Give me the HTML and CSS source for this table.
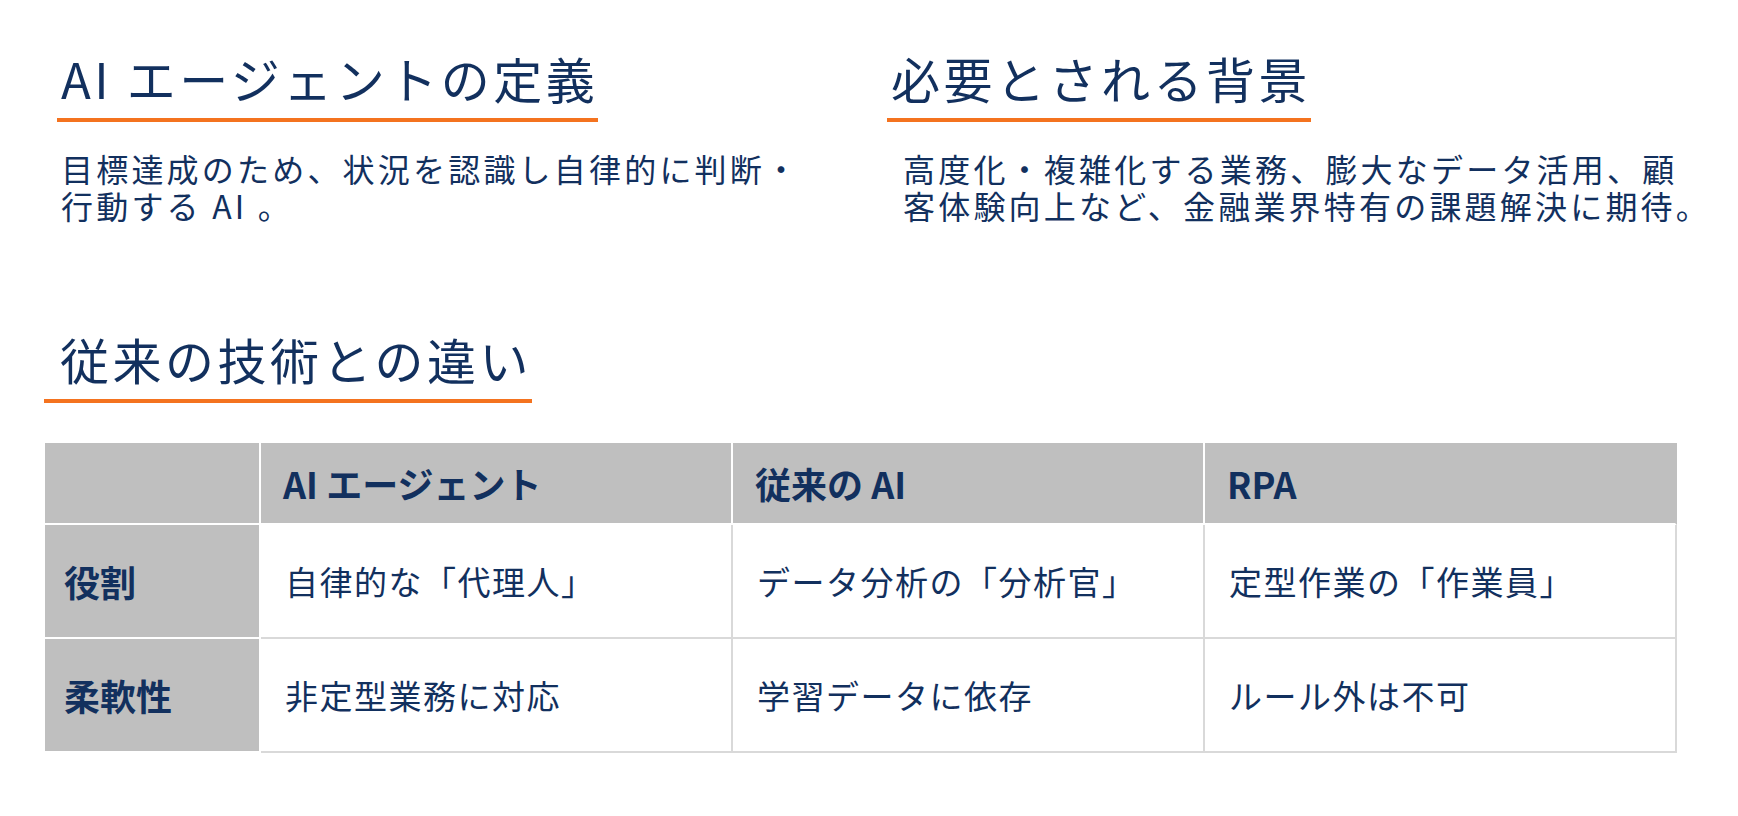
FILE: index.html
```html
<!DOCTYPE html>
<html lang="ja">
<head>
<meta charset="utf-8">
<title>AI エージェント</title>
<link rel="stylesheet" href="styles.css">
</head>
<body>
<main class="slide">
  <section class="intro">
    <div class="col col-def">
      <h2 class="heading">AI エージェントの定義</h2>
      <p class="lead"><span class="line">目標達成のため、状況を認識し自律的に判断・</span><span class="line">行動する AI 。</span></p>
    </div>
    <div class="col col-bg">
      <h2 class="heading">必要とされる背景</h2>
      <p class="lead"><span class="line">高度化・複雑化する業務、膨大なデータ活用、顧</span><span class="line">客体験向上など、金融業界特有の課題解決に期待。</span></p>
    </div>
  </section>
  <section class="compare">
    <h2 class="heading heading-wide">従来の技術との違い</h2>
    <table class="table">
      <colgroup>
        <col class="c-label">
        <col class="c-val">
        <col class="c-val">
        <col class="c-val">
      </colgroup>
      <thead>
        <tr class="row-head">
          <th class="cell-head"></th>
          <th class="cell-head">AI エージェント</th>
          <th class="cell-head">従来の AI</th>
          <th class="cell-head cell-last">RPA</th>
        </tr>
      </thead>
      <tbody>
        <tr class="row-body">
          <th class="cell-label">役割</th>
          <td class="cell">自律的な「代理人」</td>
          <td class="cell">データ分析の「分析官」</td>
          <td class="cell">定型作業の「作業員」</td>
        </tr>
        <tr class="row-body">
          <th class="cell-label">柔軟性</th>
          <td class="cell">非定型業務に対応</td>
          <td class="cell">学習データに依存</td>
          <td class="cell">ルール外は不可</td>
        </tr>
      </tbody>
    </table>
  </section>
</main>
</body>
</html>
```

FILE: styles.css
```css
html, body {
  margin: 0;
  padding: 0;
  background: #ffffff;
}

body {
  font-family: "Noto Sans CJK JP", "Noto Sans", sans-serif;
  color: #12305e;
  width: 1738px;
  height: 816px;
  overflow: hidden;
}

.slide {
  padding: 49px 0 0 44px;
}

.intro {
  display: grid;
  grid-template-columns: 830px 1fr;
  padding-left: 13px;
}

.col {
  display: flex;
  flex-direction: column;
  align-items: flex-start;
}

.heading {
  display: inline-block;
  margin: 0;
  font-size: 49px;
  font-weight: 400;
  line-height: 58px;
  letter-spacing: 3.5px;
  padding-bottom: 11px;
  border-bottom: 4px solid #f4731f;
  white-space: nowrap;
}

.col-def .heading {
  padding-left: 4px;
}

.col-bg .heading {
  padding-left: 4px;
}

.lead {
  margin: 28px 0 0;
  font-size: 32px;
  line-height: 37px;
  letter-spacing: 3.2px;
  white-space: nowrap;
}

.line {
  display: block;
  height: 37px;
}

.col-def .lead {
  padding-left: 4px;
}

.col-bg .lead {
  padding-left: 16px;
}

.compare {
  margin-top: 106px;
}

.heading-wide {
  padding-left: 16px;
}

.table {
  margin-top: 40px;
  margin-left: 1px;
  width: 1632px;
  table-layout: fixed;
  border-collapse: separate;
  border-spacing: 0;
}

.c-label {
  width: 216px;
}

.c-val {
  width: 472px;
}

.row-head {
  height: 82px;
}

.row-body {
  height: 114px;
}

.cell-head,
.cell-label,
.cell {
  text-align: left;
  vertical-align: middle;
  padding: 0 0 0 22px;
  white-space: nowrap;
}

.cell-head {
  background: #bfbfbf;
  border-right: 2px solid #ffffff;
  border-bottom: 2px solid #ffffff;
  font-size: 36px;
  font-weight: 700;
}

.cell-last {
  border-right-color: #bfbfbf;
}

.cell-label {
  background: #bfbfbf;
  border-right: 2px solid #ffffff;
  border-bottom: 2px solid #ffffff;
  font-size: 36px;
  font-weight: 700;
  padding-left: 19px;
}

.cell {
  background: #ffffff;
  border-right: 2px solid #d9d9d9;
  border-bottom: 2px solid #d9d9d9;
  font-size: 33px;
  font-weight: 400;
  letter-spacing: 1.5px;
  padding-left: 24px;
}
```
